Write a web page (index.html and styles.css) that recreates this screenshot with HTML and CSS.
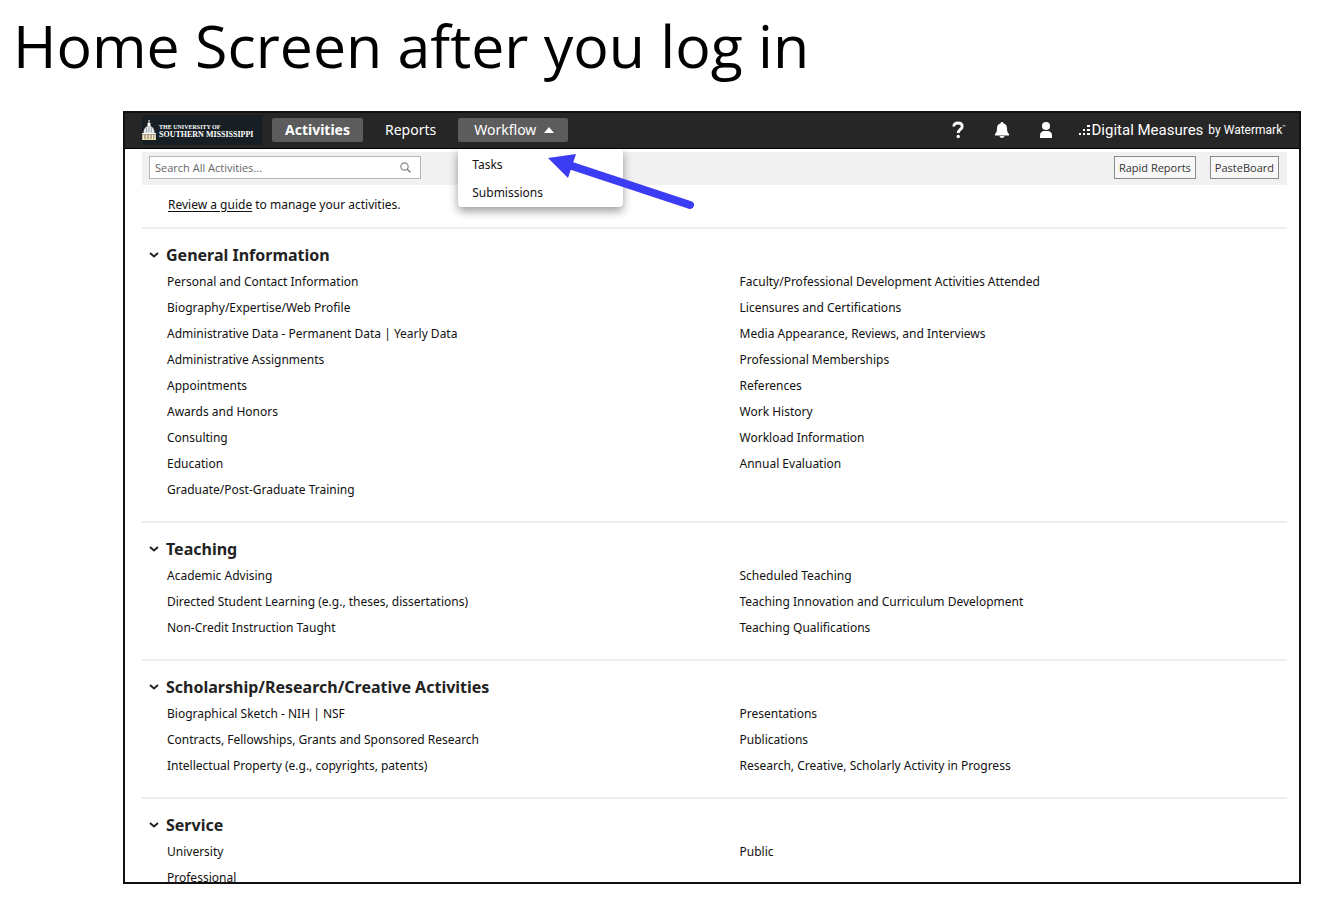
FILE: index.html
```html
<!DOCTYPE html>
<html lang="en">

<head>
    <meta charset="UTF-8">
    <meta name="viewport" content="width=device-width, initial-scale=1.0">
    <title>Home Screen after you log in</title>
    <link rel="stylesheet" href="styles.css">
</head>

<body>
    <h1 class="slide-title">Home Screen after you log in</h1>

    <div class="app">
        <header class="topbar">
            <a class="school" href="#">
                <svg class="dome" width="14" height="20" viewBox="0 0 14 20" aria-hidden="true">
                    <path d="M6.5 0h1v3h1v3h-3V3h1z" fill="#fff" />
                    <path d="M1.5 13C1.500 8.500 4 6 7 6s5.500 2.500 5.500 7z" fill="#e4e7e8" />
                    <path d="M4.500 7.500v5M7 6.500v6M9.500 7.500v5" stroke="#89949a" stroke-width="0.700" />
                    <path d="M0 13h14v1.500H0z" fill="#fff" />
                    <path d="M0 14.500h14V20H0z" fill="#b9aa83" />
                    <path d="M1.500 15v4M4.500 15v4M7.500 15v4M10.500 15v4M13 15v4" stroke="#f7f2df" />
                    <path d="M0 19h14v1H0z" fill="#e9dba8" />
                </svg>
                <span class="school-name"><small>THE UNIVERSITY OF</small>SOUTHERN MISSISSIPPI</span>
            </a>

            <nav class="nav">
                <button type="button" class="tab tab-current">Activities</button>
                <button type="button" class="tab">Reports</button>
                <div class="dropdown">
                    <button type="button" class="tab tab-open">Workflow
                        <svg width="10" height="6" viewBox="0 0 10 6" aria-hidden="true"><path d="M0 6l5-6 5 6z" fill="#fff" /></svg>
                    </button>
                    <div class="menu">
                        <a href="#">Tasks</a>
                        <a href="#">Submissions</a>
                    </div>
                </div>
            </nav>

            <div class="tools">
                <button type="button" class="icon" aria-label="Help">
                    <svg width="16" height="18" viewBox="0 0 16 18">
                        <path d="M3.800 5.500C3.800 3.200 5.400 2 8 2s4.200 1.300 4.200 3.400C12.200 8.300 8.200 8.400 8.200 12" fill="none" stroke="#fff" stroke-width="2.800" />
                        <circle cx="8.200" cy="15.500" r="1.700" fill="#fff" />
                    </svg>
                </button>
                <button type="button" class="icon" aria-label="Notifications">
                    <svg width="16" height="18" viewBox="0 0 16 18">
                        <path d="M8 1c.8 0 1.300.5 1.300 1.200C11.800 2.900 13 4.800 13 7c0 3.300.5 4.500 2 6v1.500H1V13c1.500-1.500 2-2.700 2-6 0-2.200 1.200-4.100 3.700-4.800C6.700 1.500 7.200 1 8 1z" fill="#fff" />
                        <path d="M5.500 15h5c-.3 1.300-1.200 2-2.500 2s-2.200-.7-2.500-2z" fill="#fff" />
                    </svg>
                </button>
                <button type="button" class="icon" aria-label="Account">
                    <svg width="16" height="18" viewBox="0 0 16 18">
                        <circle cx="8" cy="5" r="4" fill="#fff" />
                        <path d="M2 17v-2.500C2 11.500 4 10 6 10h4c2 0 4 1.500 4 4.500V17z" fill="#fff" />
                    </svg>
                </button>
            </div>

            <div class="brand">
                <svg width="12" height="12" viewBox="0 0 12 12" fill="#fff" aria-hidden="true">
                    <path d="M0 9h2v2H0zM4 9h2v2H4zM8 9h3v2H8zM4 5h2v2H4zM8 5h3v2H8zM8 1h3v2H8z" />
                </svg>
                <span class="brand-name">Digital Measures</span>
                <span class="brand-by">by Watermark<sup>™</sup></span>
            </div>
        </header>

        <main class="content">
            <div class="toolbar">
                <form class="search">
                    <input type="text" placeholder="Search All Activities..." aria-label="Search All Activities">
                    <svg width="11" height="11" viewBox="0 0 11 11" fill="none" stroke="#888" aria-hidden="true">
                        <circle cx="4.500" cy="4.500" r="3.700" stroke-width="1.200" />
                        <path d="M7.200 7.200L10.500 10.500" stroke-width="1.600" />
                    </svg>
                </form>
                <button type="button" class="btn">Rapid Reports</button>
                <button type="button" class="btn">PasteBoard</button>
            </div>

            <p class="guide"><a href="#">Review a guide</a> to manage your activities.</p>

            <section class="group">
                <h2><svg class="chevron" viewBox="0 0 10 6"><path d="M1 1l4 3.500L9 1" /></svg>General Information</h2>
                <div class="columns">
                    <ul>
                        <li><a href="#">Personal and Contact Information</a></li>
                        <li><a href="#">Biography/Expertise/Web Profile</a></li>
                        <li><a href="#">Administrative Data - Permanent Data</a> | <a href="#">Yearly Data</a></li>
                        <li><a href="#">Administrative Assignments</a></li>
                        <li><a href="#">Appointments</a></li>
                        <li><a href="#">Awards and Honors</a></li>
                        <li><a href="#">Consulting</a></li>
                        <li><a href="#">Education</a></li>
                        <li><a href="#">Graduate/Post-Graduate Training</a></li>
                    </ul>
                    <ul>
                        <li><a href="#">Faculty/Professional Development Activities Attended</a></li>
                        <li><a href="#">Licensures and Certifications</a></li>
                        <li><a href="#">Media Appearance, Reviews, and Interviews</a></li>
                        <li><a href="#">Professional Memberships</a></li>
                        <li><a href="#">References</a></li>
                        <li><a href="#">Work History</a></li>
                        <li><a href="#">Workload Information</a></li>
                        <li><a href="#">Annual Evaluation</a></li>
                    </ul>
                </div>
            </section>

            <section class="group">
                <h2><svg class="chevron" viewBox="0 0 10 6"><path d="M1 1l4 3.500L9 1" /></svg>Teaching</h2>
                <div class="columns">
                    <ul>
                        <li><a href="#">Academic Advising</a></li>
                        <li><a href="#">Directed Student Learning (e.g., theses, dissertations)</a></li>
                        <li><a href="#">Non-Credit Instruction Taught</a></li>
                    </ul>
                    <ul>
                        <li><a href="#">Scheduled Teaching</a></li>
                        <li><a href="#">Teaching Innovation and Curriculum Development</a></li>
                        <li><a href="#">Teaching Qualifications</a></li>
                    </ul>
                </div>
            </section>

            <section class="group">
                <h2><svg class="chevron" viewBox="0 0 10 6"><path d="M1 1l4 3.500L9 1" /></svg>Scholarship/Research/Creative Activities</h2>
                <div class="columns">
                    <ul>
                        <li><a href="#">Biographical Sketch - NIH</a> | <a href="#">NSF</a></li>
                        <li><a href="#">Contracts, Fellowships, Grants and Sponsored Research</a></li>
                        <li><a href="#">Intellectual Property (e.g., copyrights, patents)</a></li>
                    </ul>
                    <ul>
                        <li><a href="#">Presentations</a></li>
                        <li><a href="#">Publications</a></li>
                        <li><a href="#">Research, Creative, Scholarly Activity in Progress</a></li>
                    </ul>
                </div>
            </section>

            <section class="group">
                <h2><svg class="chevron" viewBox="0 0 10 6"><path d="M1 1l4 3.500L9 1" /></svg>Service</h2>
                <div class="columns">
                    <ul>
                        <li><a href="#">University</a></li>
                        <li><a href="#">Professional</a></li>
                    </ul>
                    <ul>
                        <li><a href="#">Public</a></li>
                    </ul>
                </div>
            </section>
        </main>

        <!-- arrow pointing at the Workflow menu -->
        <svg class="arrow" width="150" height="60" viewBox="0 0 150 60" aria-hidden="true">
            <path d="M24 12L142 51" stroke="#3c3cf5" stroke-width="8" stroke-linecap="round" />
            <path d="M0 4l28-4-8 24z" fill="#3c3cf5" />
        </svg>
    </div>
</body>

</html>
```
FILE: styles.css
```css
/* Reset */
* {
    margin: 0;
    padding: 0;
    box-sizing: border-box;
}

body {
    display: flex;
    flex-direction: column;
    height: 100vh;
    padding: 0 19px 20px 13px;
    background-color: #fff;
    color: #111;
    font-family: "Noto Sans", sans-serif;
    font-size: 12px;
}

a {
    color: inherit;
    text-decoration: none;
}

button,
input {
    font-family: inherit;
}

.slide-title {
    padding-top: 9px;
    height: 111px;
    flex: none;
    font-family: "Open Sans", sans-serif;
    font-weight: 400;
    font-size: 59px;
    line-height: 72px;
    color: #000;
}

/* App window */
.app {
    position: relative;
    flex: 1;
    min-height: 0;
    margin-left: 110px;
    border: 2px solid #111;
    overflow: hidden;
}

/* Top bar */
.topbar {
    display: flex;
    align-items: center;
    height: 36px;
    padding: 0 13px 2px 17px;
    background-color: #262626;
    border-bottom: 1px solid #000;
    color: #fff;
}

.school {
    display: flex;
    align-items: center;
    gap: 3px;
    width: 120px;
    height: 30px;
    background-color: #171f24;
}

.dome {
    flex: none;
}

.school-name {
    padding-top: 3px;
    font-family: "Liberation Serif", serif;
    font-weight: bold;
    font-size: 8px;
    line-height: 7px;
    white-space: nowrap;
}

.school-name small {
    display: block;
    font-size: 6px;
}

.nav {
    display: flex;
    gap: 6px;
    margin-left: 10px;
}

.tab {
    display: flex;
    align-items: center;
    gap: 8px;
    height: 24px;
    padding: 0 16px;
    border: 0;
    border-radius: 2px;
    background: none;
    color: #fff;
    font-size: 14px;
}

.tab-current,
.tab-open {
    background-color: #5c5c5c;
}

.tab-current {
    padding: 0 13px;
    font-weight: bold;
}

.tab-open {
    padding-right: 14px;
}

.dropdown {
    position: relative;
}

.menu {
    position: absolute;
    top: 31px;
    left: 0;
    z-index: 2;
    width: 165px;
    padding-top: 2px;
    background-color: #fff;
    border-radius: 0 0 4px 4px;
    box-shadow: 0 4px 10px rgba(0, 0, 0, 0.4);
    color: #111;
    font-size: 12px;
}

.menu a {
    display: block;
    padding: 0 14px;
    line-height: 28px;
}

.tools {
    display: flex;
    gap: 28px;
    margin-left: auto;
}

.icon {
    display: flex;
    border: 0;
    background: none;
}

.brand {
    display: flex;
    align-items: center;
    gap: 1px;
    margin-left: 25px;
    font-family: Roboto, sans-serif;
    white-space: nowrap;
}

.brand-name {
    font-size: 15px;
}

.brand-by {
    margin-left: 4px;
    font-size: 12px;
}

.brand-by sup {
    font-size: 6px;
}

/* Page content */
.content {
    padding: 3px 12px 0 17px;
}

.toolbar {
    display: flex;
    align-items: flex-start;
    gap: 14px;
    height: 33px;
    padding: 4px 8px 0 7px;
    background-color: #f1f1f1;
}

.search {
    display: flex;
    align-items: center;
    width: 272px;
    height: 23px;
    margin-right: auto;
    padding: 0 9px 0 5px;
    border: 1px solid #b5b5b5;
    background-color: #fff;
}

.search input {
    flex: 1;
    min-width: 0;
    border: 0;
    outline: 0;
    background: none;
    font-family: "Open Sans", sans-serif;
    font-size: 11px;
}

.search input::placeholder {
    color: #666;
}

.btn {
    height: 23px;
    padding: 0 4px;
    border: 1px solid #8a8a8a;
    background-color: #f8f8f8;
    color: #333;
    font-family: "Open Sans", sans-serif;
    font-size: 11px;
}

.guide {
    padding: 8px 26px 10px;
    line-height: 24px;
}

.guide a {
    text-decoration: underline;
    text-underline-offset: 2px;
}

/* Activity groups */
.group {
    padding: 12px 0 18px;
    border-top: 2px solid #eee;
}

.group h2 {
    display: flex;
    align-items: center;
    gap: 7px;
    padding-left: 7px;
    font-size: 16px;
    line-height: 28px;
    color: #222;
}

.chevron {
    width: 10px;
    height: 6px;
    fill: none;
    stroke: #222;
    stroke-width: 2;
}

.columns {
    display: grid;
    grid-template-columns: 1fr 1fr;
}

.columns ul {
    padding-left: 25px;
    list-style: none;
}

.columns li {
    line-height: 26px;
}

/* Callout arrow */
.arrow {
    position: absolute;
    top: 41px;
    left: 423px;
    z-index: 3;
}
```
